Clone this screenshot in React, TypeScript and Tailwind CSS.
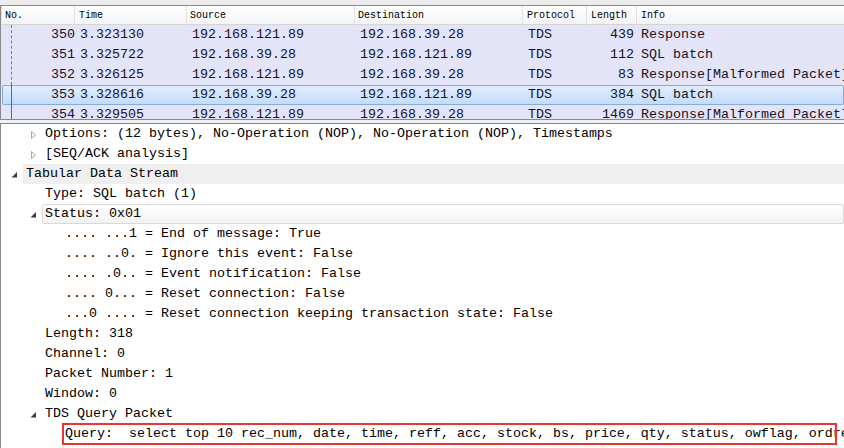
import React from "react";

const ROWS = [
  { no: "350", time: "3.323130", src: "192.168.121.89", dst: "192.168.39.28", proto: "TDS", len: "439", info: "Response" },
  { no: "351", time: "3.325722", src: "192.168.39.28", dst: "192.168.121.89", proto: "TDS", len: "112", info: "SQL batch" },
  { no: "352", time: "3.326125", src: "192.168.121.89", dst: "192.168.39.28", proto: "TDS", len: "83", info: "Response[Malformed Packet]" },
  { no: "353", time: "3.328616", src: "192.168.39.28", dst: "192.168.121.89", proto: "TDS", len: "384", info: "SQL batch", selected: true },
  { no: "354", time: "3.329505", src: "192.168.121.89", dst: "192.168.39.28", proto: "TDS", len: "1469", info: "Response[Malformed Packet]" },
];

type Node = { level: 1 | 2 | 3; state: "open" | "closed" | "leaf"; text: string; look?: "hover" | "focus" };

const TREE: Node[] = [
  { level: 2, state: "closed", text: "Options: (12 bytes), No-Operation (NOP), No-Operation (NOP), Timestamps" },
  { level: 2, state: "closed", text: "[SEQ/ACK analysis]" },
  { level: 1, state: "open", text: "Tabular Data Stream", look: "hover" },
  { level: 2, state: "leaf", text: "Type: SQL batch (1)" },
  { level: 2, state: "open", text: "Status: 0x01", look: "focus" },
  { level: 3, state: "leaf", text: ".... ...1 = End of message: True" },
  { level: 3, state: "leaf", text: ".... ..0. = Ignore this event: False" },
  { level: 3, state: "leaf", text: ".... .0.. = Event notification: False" },
  { level: 3, state: "leaf", text: ".... 0... = Reset connection: False" },
  { level: 3, state: "leaf", text: "...0 .... = Reset connection keeping transaction state: False" },
  { level: 2, state: "leaf", text: "Length: 318" },
  { level: 2, state: "leaf", text: "Channel: 0" },
  { level: 2, state: "leaf", text: "Packet Number: 1" },
  { level: 2, state: "leaf", text: "Window: 0" },
  { level: 2, state: "open", text: "TDS Query Packet" },
  { level: 3, state: "leaf", text: "Query:  select top 10 rec_num, date, time, reff, acc, stock, bs, price, qty, status, owflag, ordref, ordtime" },
];

const COLS = "grid grid-cols-[73px_112px_168px_168px_64px_50px_1fr]";
const SPACER = { 1: "w-[9px]", 2: "w-[28px]", 3: "w-[48px]" };

function Arrow({ state }: { state: Node["state"] }) {
  if (state === "closed")
    return (
      <svg width="16" height="20" viewBox="0 0 16 20">
        <path d="M2.5 7.5 L6.5 11 L2.5 14.5 Z" fill="none" stroke="#a6a6a6" strokeWidth="1" />
      </svg>
    );
  if (state === "open")
    return (
      <svg width="16" height="20" viewBox="0 0 16 20">
        <path d="M7 8 L7 13.5 L1.5 13.5 Z" fill="#3c3c3c" />
      </svg>
    );
  return null;
}

export default function App() {
  return (
    <div className="w-[844px] h-[448px] overflow-hidden bg-white text-black font-['Liberation_Mono',monospace] relative">
      <div className="h-[5px] bg-[#ececec]" />

      <div className="relative h-[115px] border-y border-l border-[#8a8a8a] bg-[#e4e4f8] overflow-hidden">
        <div className={`${COLS} ml-[1px] h-[19px] bg-gradient-to-b from-white to-[#f3f4f6] border-b border-[#d5d5d5] text-[10px] leading-[19px]`}>
          <div className="pl-[3px] border-r border-[#e2e2e2]">No.</div>
          <div className="pl-[4px] border-r border-[#e2e2e2]">Time</div>
          <div className="pl-[3px] border-r border-[#e2e2e2]">Source</div>
          <div className="pl-[3px] border-r border-[#e2e2e2]">Destination</div>
          <div className="pl-[4px] border-r border-[#e2e2e2]">Protocol</div>
          <div className="pl-[4px] border-r border-[#e2e2e2]">Length</div>
          <div className="pl-[4px]">Info</div>
        </div>
        {ROWS.map((r) => (
          <div
            key={r.no}
            className={`${COLS} ml-[1px] h-[20px] border rounded-[2px] text-[13.33px] leading-[18px] text-[#141428] ${
              r.selected ? "border-[#84acdd] bg-gradient-to-b from-[#e2edfc] to-[#c3dbfa]" : "border-transparent"
            }`}
          >
            <div className="text-right pr-[1px]">{r.no}</div>
            <div className="pl-[4px]">{r.time}</div>
            <div className="pl-[4px]">{r.src}</div>
            <div className="pl-[4px]">{r.dst}</div>
            <div className="pl-[4px]">{r.proto}</div>
            <div className="text-right pr-[4px]">{r.len}</div>
            <div className="pl-[3px] whitespace-nowrap">{r.info}</div>
          </div>
        ))}
        <div className="absolute left-[10px] top-[19px] h-[60px] border-l border-dashed border-[#7a7a7a]" />
        <div className="absolute left-[10px] top-[79px] h-[40px] border-l border-[#6a6a6a]" />
      </div>

      <div className="h-[3px] bg-[#f0f0f0]" />

      <div className="border-t border-l border-[#828790] h-[325px] text-[13.33px] leading-[20px]">
        {TREE.map((n, i) => (
          <div key={i} className="flex h-[20px] whitespace-pre">
            <span className={`${SPACER[n.level]} shrink-0`} />
            <span className="w-[16px] shrink-0 flex">
              <Arrow state={n.state} />
            </span>
            <span
              className={`flex-1 ${
                n.look === "hover"
                  ? "-ml-[3px] pl-[3px] bg-[#efefef]"
                  : n.look === "focus"
                  ? "-ml-[3px] pl-[2px] border border-[#d9d9d9] rounded-[2px] bg-gradient-to-b from-white to-[#f2f2f2] leading-[18px]"
                  : ""
              }`}
            >
              {n.text}
            </span>
          </div>
        ))}
      </div>

      <div className="absolute left-[62px] top-[423px] w-[775px] h-[22px] border-2 border-[#ee3333]" />
    </div>
  );
}
